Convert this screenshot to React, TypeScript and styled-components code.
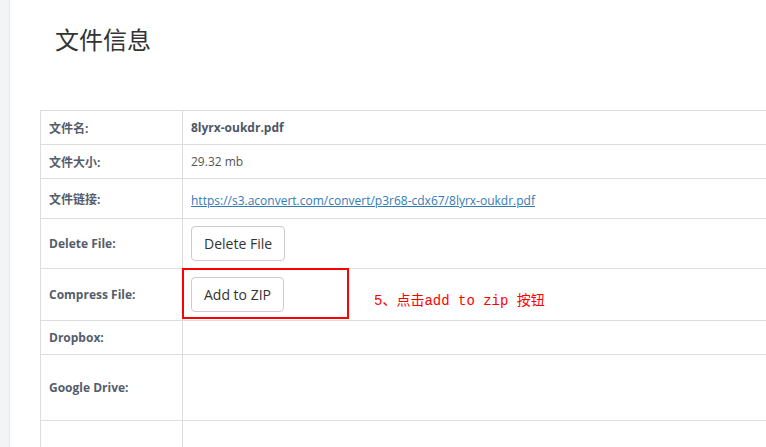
import React from "react";
import styled, { createGlobalStyle } from "styled-components";

const Global = createGlobalStyle`
  html, body { margin: 0; padding: 0; background: #fff; overflow: hidden; }
  body { font-family: "Open Sans", "Noto Sans CJK SC", sans-serif; }
`;

const Page = styled.div`
  display: flex;
  width: 766px;
  height: 447px;
  overflow: hidden;
`;

const SideStrip = styled.div`
  flex: 0 0 9px;
  background: #f3f4f5;
  border-right: 1px solid #e4e8ec;
`;

const Main = styled.div`
  flex: 1;
  padding-left: 30px;
  min-width: 0;
`;

const Title = styled.h1`
  margin: 0;
  padding: 22px 0 0 15px;
  height: 110px;
  box-sizing: border-box;
  font-family: "Noto Sans CJK SC", sans-serif;
  font-weight: 400;
  font-size: 24px;
  line-height: 34px;
  color: #333;
`;

const Table = styled.table`
  border-collapse: collapse;
  width: 900px;
  table-layout: fixed;
`;

const Row = styled.tr<{ $h: number }>`
  height: ${(p) => p.$h}px;
`;

const Label = styled.td`
  width: 142px;
  box-sizing: border-box;
  border: 1px solid #dddddd;
  padding: 0 8px;
  font-size: 12px;
  font-weight: 700;
  color: #555d6b;
  vertical-align: middle;
`;

const Value = styled.td<{ $bold?: boolean }>`
  position: relative;
  border: 1px solid #dddddd;
  padding: 0 8px;
  font-size: 12px;
  font-weight: ${(p) => (p.$bold ? 700 : 400)};
  color: ${(p) => (p.$bold ? "#4d5766" : "#555")};
  vertical-align: middle;
`;

const Link = styled.a`
  color: #337ab7;
  text-decoration: underline;
  position: relative;
  top: 2px;
`;

const Button = styled.button`
  font-family: "Open Sans", sans-serif;
  font-size: 14px;
  line-height: 21px;
  padding: 6px 12px;
  color: #333;
  background: #fff;
  border: 1px solid #ccc;
  border-radius: 4px;
`;

const Highlight = styled.div`
  position: absolute;
  left: -1px;
  top: -1px;
  width: 167px;
  height: 51px;
  border: 2px solid #ff0000;
  box-sizing: border-box;
  pointer-events: none;
`;

const Note = styled.span`
  position: absolute;
  left: 191px;
  top: 20px;
  white-space: nowrap;
  font-family: "Liberation Mono", "Noto Sans CJK SC", monospace;
  font-size: 14px;
  color: #ff0000;
  font-weight: 400;
`;

export default function App() {
  return (
    <>
      <Global />
      <Page>
        <SideStrip />
        <Main>
          <Title>文件信息</Title>
          <Table>
            <tbody>
              <Row $h={34}>
                <Label>文件名:</Label>
                <Value $bold>8lyrx-oukdr.pdf</Value>
              </Row>
              <Row $h={34}>
                <Label>文件大小:</Label>
                <Value>29.32 mb</Value>
              </Row>
              <Row $h={40}>
                <Label>文件链接:</Label>
                <Value>
                  <Link href="#">https://s3.aconvert.com/convert/p3r68-cdx67/8lyrx-oukdr.pdf</Link>
                </Value>
              </Row>
              <Row $h={50}>
                <Label>Delete File:</Label>
                <Value>
                  <Button>Delete File</Button>
                </Value>
              </Row>
              <Row $h={52}>
                <Label>Compress File:</Label>
                <Value>
                  <Button>Add to ZIP</Button>
                  <Highlight />
                  <Note>5、点击add to zip 按钮</Note>
                </Value>
              </Row>
              <Row $h={34}>
                <Label>Dropbox:</Label>
                <Value />
              </Row>
              <Row $h={66}>
                <Label>Google Drive:</Label>
                <Value />
              </Row>
              <Row $h={40}>
                <Label />
                <Value />
              </Row>
            </tbody>
          </Table>
        </Main>
      </Page>
    </>
  );
}
